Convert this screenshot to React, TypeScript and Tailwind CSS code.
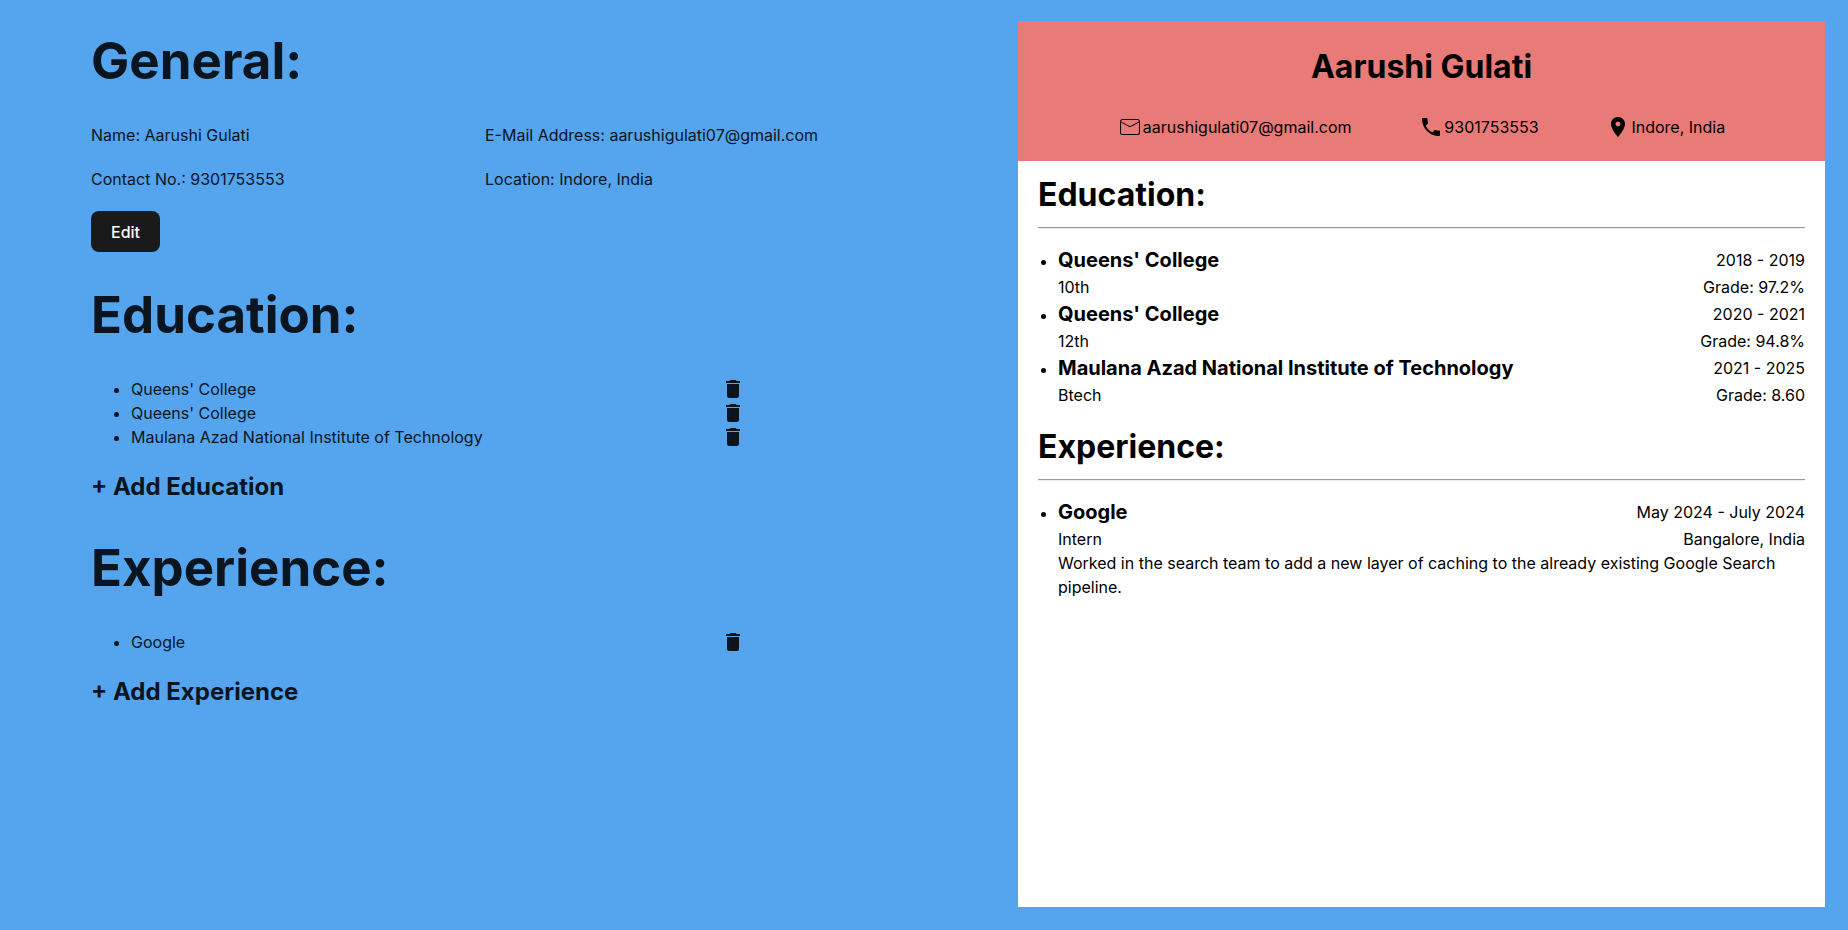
import { useState, type ReactNode } from 'react';
import { CiMail } from 'react-icons/ci';
import { MdDelete, MdLocalPhone, MdLocationOn } from 'react-icons/md';

type Education = { id: number; school: string; degree: string; years: string; grade: string };
type Experience = { id: number; company: string; role: string; years: string; place: string; details: string };

const general = {
  name: 'Aarushi Gulati',
  email: 'aarushigulati07@gmail.com',
  phone: '9301753553',
  location: 'Indore, India',
};

const initialEducation: Education[] = [
  { id: 1, school: "Queens' College", degree: '10th', years: '2018 - 2019', grade: '97.2%' },
  { id: 2, school: "Queens' College", degree: '12th', years: '2020 - 2021', grade: '94.8%' },
  { id: 3, school: 'Maulana Azad National Institute of Technology', degree: 'Btech', years: '2021 - 2025', grade: '8.60' },
];

const initialExperience: Experience[] = [
  {
    id: 1,
    company: 'Google',
    role: 'Intern',
    years: 'May 2024 - July 2024',
    place: 'Bangalore, India',
    details: 'Worked in the search team to add a new layer of caching to the already existing Google Search pipeline.',
  },
];

function EditorSection({ title, children }: { title: string; children: ReactNode }) {
  return (
    <section className="flex flex-col items-start">
      <h1 className="mb-[34px] text-[51px] leading-[57px] font-bold">{title}</h1>
      {children}
    </section>
  );
}

type EditorListProps = {
  items: { id: number; label: string }[];
  onDelete: (id: number) => void;
  addLabel: string;
};

function EditorList({ items, onDelete, addLabel }: EditorListProps) {
  return (
    <>
      <ul className="w-[83%] list-disc pl-10">
        {items.map((item) => (
          <li key={item.id}>
            <div className="flex justify-between">
              <span>{item.label}</span>
              <button type="button" aria-label={`Delete ${item.label}`} onClick={() => onDelete(item.id)} className="cursor-pointer">
                <MdDelete className="size-6" />
              </button>
            </div>
          </li>
        ))}
      </ul>
      <button type="button" className="mt-5 cursor-pointer text-2xl leading-9 font-bold">
        {addLabel}
      </button>
    </>
  );
}

function ContactItem({ icon, children }: { icon: ReactNode; children: ReactNode }) {
  return (
    <div className="flex items-center gap-px">
      {icon}
      <span>{children}</span>
    </div>
  );
}

function ResumeSection({ title, children }: { title: string; children: ReactNode }) {
  return (
    <section>
      <h2 className="text-[32px] leading-[48px] font-bold">{title}</h2>
      <hr className="mt-2 mb-4 h-[2px] border-t border-b border-t-[#9a9a9a] border-b-[#eeeeee]" />
      <ul className="list-disc pl-5">{children}</ul>
    </section>
  );
}

type ResumeEntryProps = { title: string; dates: string; subtitle: string; note: string; details?: string };

function ResumeEntry({ title, dates, subtitle, note, details }: ResumeEntryProps) {
  return (
    <li>
      <div className="flex items-center justify-between">
        <h3 className="text-xl leading-[30px] font-bold">{title}</h3>
        <span>{dates}</span>
      </div>
      <div className="flex justify-between">
        <span>{subtitle}</span>
        <span>{note}</span>
      </div>
      {details && <p>{details}</p>}
    </li>
  );
}

export default function App() {
  const [education, setEducation] = useState(initialEducation);
  const [experience, setExperience] = useState(initialExperience);

  return (
    <div className="grid min-h-screen grid-cols-[1018fr_807fr] bg-[#54a4ee] pt-[21px] pr-[23px] pb-[23px] font-['Inter',sans-serif] text-base leading-6 text-black">
      <main className="flex flex-col gap-[34px] pt-[11px] pr-[139px] pl-[91px] text-[#0b151f]">
        <EditorSection title="General:">
          <div className="grid w-full grid-cols-2 gap-y-5">
            <p>Name: {general.name}</p>
            <p>E-Mail Address: {general.email}</p>
            <p>Contact No.: {general.phone}</p>
            <p>Location: {general.location}</p>
          </div>
          <button type="button" className="mt-5 min-h-[41px] cursor-pointer rounded-lg bg-[#1a1a1a] px-5 font-medium text-white">
            Edit
          </button>
        </EditorSection>
        <EditorSection title="Education:">
          <EditorList
            items={education.map((e) => ({ id: e.id, label: e.school }))}
            onDelete={(id) => setEducation(education.filter((e) => e.id !== id))}
            addLabel="+ Add Education"
          />
        </EditorSection>
        <EditorSection title="Experience:">
          <EditorList
            items={experience.map((e) => ({ id: e.id, label: e.company }))}
            onDelete={(id) => setExperience(experience.filter((e) => e.id !== id))}
            addLabel="+ Add Experience"
          />
        </EditorSection>
      </main>

      <article className="bg-white">
        <header className="flex flex-col gap-6 bg-[#e87a78] px-8 py-[22px]">
          <h2 className="text-center text-[32px] leading-[48px] font-bold">{general.name}</h2>
          <div className="flex justify-evenly">
            <ContactItem icon={<CiMail className="size-6" />}>{general.email}</ContactItem>
            <ContactItem icon={<MdLocalPhone className="size-6" />}>{general.phone}</ContactItem>
            <ContactItem icon={<MdLocationOn className="size-6" />}>{general.location}</ContactItem>
          </div>
        </header>
        <div className="flex flex-col gap-4 px-5 py-[10px]">
          <ResumeSection title="Education:">
            {education.map((e) => (
              <ResumeEntry key={e.id} title={e.school} dates={e.years} subtitle={e.degree} note={`Grade: ${e.grade}`} />
            ))}
          </ResumeSection>
          <ResumeSection title="Experience:">
            {experience.map((e) => (
              <ResumeEntry key={e.id} title={e.company} dates={e.years} subtitle={e.role} note={e.place} details={e.details} />
            ))}
          </ResumeSection>
        </div>
      </article>
    </div>
  );
}
